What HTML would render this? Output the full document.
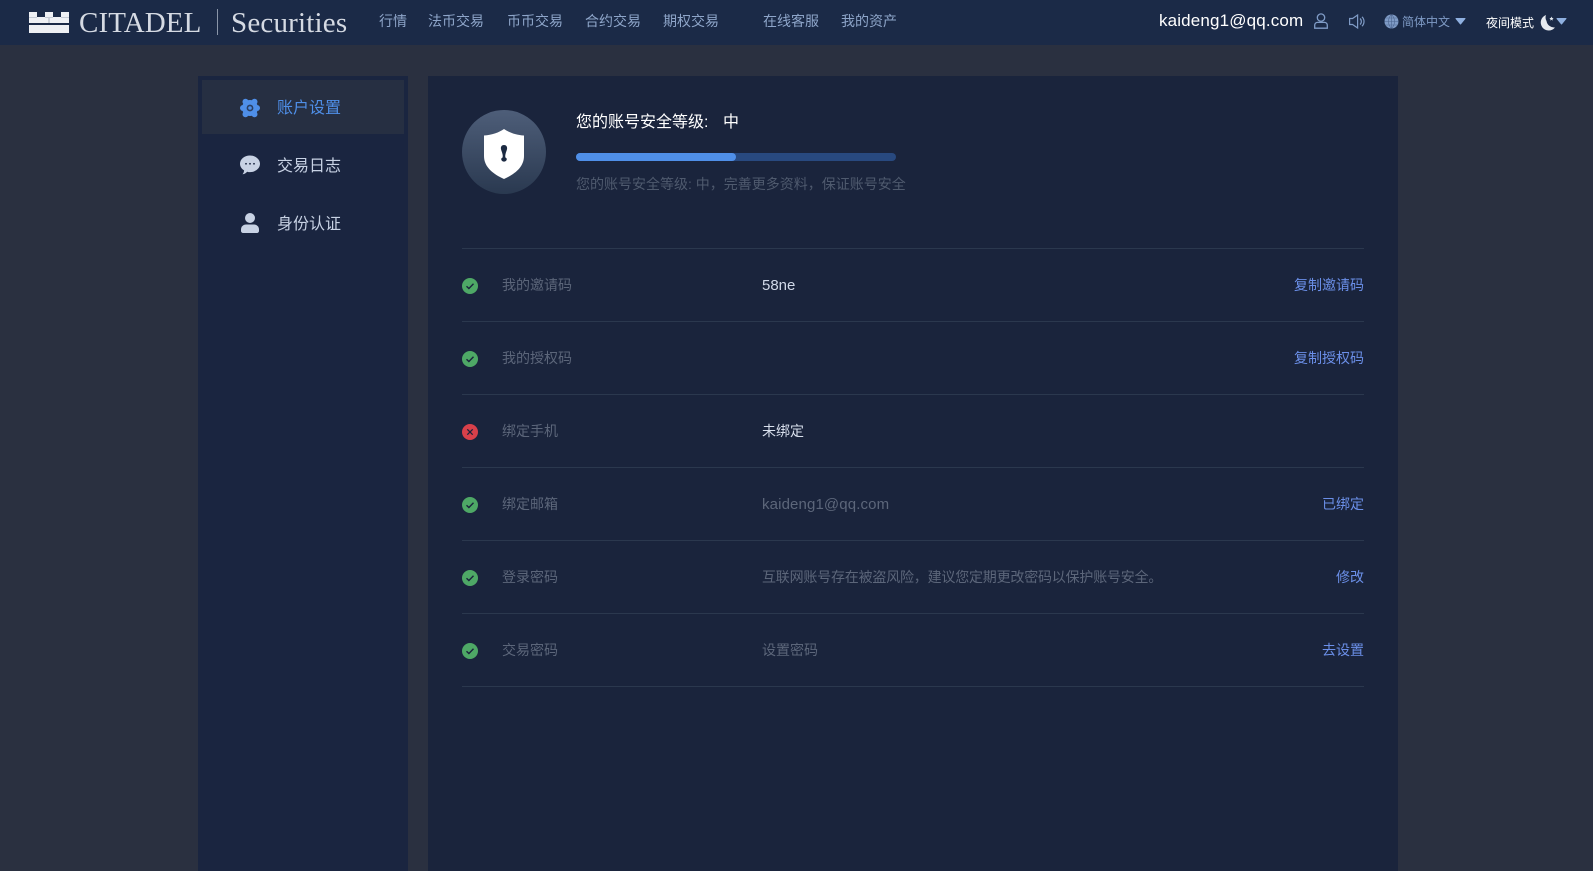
<!DOCTYPE html>
<html lang="zh-CN">
<head>
<meta charset="utf-8">
<title>账户设置</title>
<style>
html,body{margin:0;padding:0;width:1593px;height:871px;overflow:hidden;background:#2a3040;}
body{position:relative;font-family:"Liberation Sans","Noto Sans CJK SC",sans-serif;font-size:14px;}
.a{position:absolute;white-space:nowrap;line-height:20px;}
svg{position:absolute;display:block;overflow:visible;}
#hd{position:absolute;left:0;top:0;width:1593px;height:45px;background:#1b2a47;}
.n{top:11px;color:#8ea5c9;font-size:14px;}
#sb{position:absolute;left:198px;top:76px;width:210px;height:795px;background:#1a2540;}
#act{position:absolute;left:202px;top:80px;width:202px;height:54px;background:#262f42;}
#mn{position:absolute;left:428px;top:76px;width:970px;height:795px;background:#1a243c;}
.side{font-size:16px;left:277px;color:#c8d2e4;line-height:24px;}
.l{position:absolute;left:462px;width:902px;height:1px;background:#2b384e;}
.lb{left:502px;color:#5c667a;}
.v{left:762px;color:#5c667a;}
.r{right:229px;color:#6b8fe8;}
</style>
</head>
<body>
<div id="hd"></div>

<svg style="left:29px;top:12px" width="40" height="21" viewBox="0 0 40 21">
<path fill="#eef0f4" d="M0 0h8v5h8V0h8v5h8V0h8v11H0zM0 13h40v8H0z"/>
<path fill="#aab2c0" d="M0 5h8v.6H0zM16 5h8v.6h-8zM32 5h8v.6h-8zM19.500 6h1v5h-1z"/>
</svg>
<div class="a" style="left:79px;top:8px;line-height:30px;font-family:'Liberation Serif',serif;font-size:29px;letter-spacing:.1px;color:#d5dae3;">CITADEL</div>
<div style="position:absolute;left:217px;top:9px;width:1px;height:26px;background:#8a95a8;"></div>
<div class="a" style="left:231px;top:8px;line-height:30px;font-family:'Liberation Serif',serif;font-size:29px;letter-spacing:.2px;color:#d5dae3;">Securities</div>

<div class="a n" style="left:379px;">行情</div>
<div class="a n" style="left:428px;">法币交易</div>
<div class="a n" style="left:507px;">币币交易</div>
<div class="a n" style="left:585px;">合约交易</div>
<div class="a n" style="left:663px;">期权交易</div>
<div class="a n" style="left:763px;">在线客服</div>
<div class="a n" style="left:841px;">我的资产</div>

<div class="a" style="left:1159px;top:11px;font-size:17px;letter-spacing:.15px;color:#fff;">kaideng1@qq.com</div>
<svg style="left:1314px;top:13px" width="14" height="16" viewBox="0 0 14 16" fill="none" stroke="#7f9bc6" stroke-width="1.3">
<circle cx="7" cy="4.6" r="3.7"/>
<path d="M3.600 9.400h6.800a2.800 2.800 0 0 1 2.900 2.900v2.900H.7v-2.900a2.800 2.800 0 0 1 2.900-2.900z"/>
</svg>
<svg style="left:1349px;top:14px" width="16" height="15" viewBox="0 0 16 15" fill="none" stroke="#7f9bc6" stroke-width="1.2">
<path d="M.6 4.500h3L8.600 1v13L3.600 10.500h-3z"/>
<path d="M11 4.500a4 4 0 0 1 0 6M13 2.800a6.500 6.500 0 0 1 0 9.400"/>
</svg>
<svg style="left:1384px;top:14px" width="15" height="15" viewBox="0 0 15 15" fill="none">
<circle cx="7.500" cy="7.500" r="7" fill="#7f9bc6"/>
<path d="M.5 7.500h14M1.600 4h11.800M1.600 11h11.800M7.500.5v14M7.500.5c-4 4-4 10 0 14M7.500.5c4 4 4 10 0 14" stroke="#4d6690" stroke-width=".6"/>
</svg>
<div class="a" style="left:1402px;top:12px;font-size:12px;color:#7f9bc6;">简体中文</div>
<svg style="left:1455px;top:18px" width="11" height="7" viewBox="0 0 11 7"><path fill="#8fb0e0" stroke="#8fb0e0" stroke-linejoin="round" d="M1 .5h9L5.500 6z"/></svg>
<div class="a" style="left:1486px;top:13px;font-size:12px;color:#fff;">夜间模式</div>
<svg style="left:1540px;top:14px" width="16" height="17" viewBox="0 0 16 17">
<path fill="#e6eaf0" d="M6 1A8 8 0 1 0 15 13.500 7.800 7.800 0 0 1 6.500 7 7 7 0 0 1 6 1z"/>
<path fill="#e6eaf0" d="M11.500 2.500l.6 1.400 1.500.2-1.100 1 .3 1.500-1.300-.8-1.300.8.300-1.500-1.100-1 1.500-.2z"/>
</svg>
<svg style="left:1556px;top:18px" width="11" height="7" viewBox="0 0 11 7"><path fill="#8fb0e0" stroke="#8fb0e0" stroke-linejoin="round" d="M1 .5h9L5.500 6z"/></svg>

<div id="sb"></div>
<div id="act"></div>
<svg style="left:240px;top:98px" width="20" height="20" viewBox="0 0 20 20">
<g fill="#4f8fe8">
<circle cx="10" cy="10" r="8"/>
<circle cx="5.500" cy="3.800" r="3"/><circle cx="14.500" cy="3.800" r="3"/>
<circle cx="3" cy="10" r="3"/><circle cx="17" cy="10" r="3"/>
<circle cx="5.500" cy="16.200" r="3"/><circle cx="14.500" cy="16.200" r="3"/>
</g>
<circle cx="10" cy="10" r="3.400" fill="#2a3f63"/>
<circle cx="10" cy="10" r="1.800" fill="#4f8fe8"/>
</svg>
<div class="a side" style="top:97px;color:#4f8fe8;">账户设置</div>
<svg style="left:240px;top:155px" width="20" height="20" viewBox="0 0 20 20">
<path fill="#c8d2e4" d="M10 .5c5.500 0 10 3.700 10 8.300s-4.500 8.300-10 8.300c-1 0-1.900-.1-2.800-.4-1 1-2.500 2.400-4.700 2.600 1-1.100 1.500-2.500 1.600-3.900C1.600 13.900 0 11.500 0 8.800 0 4.200 4.500.5 10 .5z"/>
<circle cx="6" cy="8.800" r=".9" fill="#1a2540"/><circle cx="10" cy="8.800" r=".9" fill="#1a2540"/><circle cx="14" cy="8.800" r=".9" fill="#1a2540"/>
</svg>
<div class="a side" style="top:155px;">交易日志</div>
<svg style="left:241px;top:213px" width="18" height="20" viewBox="0 0 18 20">
<circle cx="9" cy="5" r="5" fill="#c8d2e4"/>
<path fill="#c8d2e4" d="M5 11.500h8c2.800 0 5 2.200 5 5V18c0 1.100-.9 2-2 2H2c-1.100 0-2-.9-2-2v-1.500c0-2.800 2.200-5 5-5z"/>
</svg>
<div class="a side" style="top:213px;">身份认证</div>

<div id="mn"></div>
<svg style="left:462px;top:110px" width="84" height="84" viewBox="0 0 84 84">
<defs><linearGradient id="g" x1="0" y1="0" x2="0" y2="1"><stop offset="0" stop-color="#4e5e79"/><stop offset="1" stop-color="#2a3950"/></linearGradient></defs>
<circle cx="42" cy="42" r="42" fill="url(#g)"/>
<path fill="#fff" d="M42 19c5 3.500 12 6 20 6.500V46c0 11-9 18-20 23-11-5-20-12-20-23V25.500C30 25 37 22.500 42 19z"/>
<path fill="#1c2a42" d="M42 35c2.200 0 3.300 1.600 3.100 3.600-.2 1.700-1.300 3.600-1.700 6-.2 1-.2 2 .1 3 1.200.4 1.400 1.300 1.200 2.100-.3 1.200-1.500 1.900-2.700 1.900s-2.400-.7-2.700-1.900c-.2-.8 0-1.700 1.200-2.100.3-1 .3-2 .1-3-.4-2.400-1.500-4.300-1.700-6-.2-2 .9-3.600 3.100-3.600z"/>
</svg>
<div class="a" style="left:576px;top:113px;font-size:16px;color:#fff;">您的账号安全等级:</div>
<div class="a" style="left:723px;top:113px;font-size:16px;color:#fff;">中</div>
<div style="position:absolute;left:576px;top:153px;width:320px;height:8px;border-radius:4px;background:#28497f;"></div>
<div style="position:absolute;left:576px;top:153px;width:160px;height:8px;border-radius:4px;background:#4f8fe8;"></div>
<div class="a" style="left:576px;top:174px;color:#4f5a6e;">您的账号安全等级: 中，完善更多资料，保证账号安全</div>

<div class="l" style="top:248px"></div>
<div class="l" style="top:321px"></div>
<div class="l" style="top:394px"></div>
<div class="l" style="top:467px"></div>
<div class="l" style="top:540px"></div>
<div class="l" style="top:613px"></div>
<div class="l" style="top:686px"></div>

<svg style="left:462px;top:278px" width="16" height="16" viewBox="0 0 16 16"><circle cx="8" cy="8" r="8" fill="#4ea866"/><path d="M4.500 8.200l2.400 2.300 4.600-4.700" fill="none" stroke="#1a243c" stroke-width="1.400"/></svg>
<div class="a lb" style="top:275px;">我的邀请码</div>
<div class="a" style="left:762px;top:276px;font-size:15px;color:#d0d8e8;">58ne</div>
<div class="a r" style="top:275px;">复制邀请码</div>

<svg style="left:462px;top:351px" width="16" height="16" viewBox="0 0 16 16"><circle cx="8" cy="8" r="8" fill="#4ea866"/><path d="M4.500 8.200l2.400 2.300 4.600-4.700" fill="none" stroke="#1a243c" stroke-width="1.400"/></svg>
<div class="a lb" style="top:348px;">我的授权码</div>
<div class="a r" style="top:348px;">复制授权码</div>

<svg style="left:462px;top:424px" width="16" height="16" viewBox="0 0 16 16"><circle cx="8" cy="8" r="8" fill="#d8404a"/><path d="M5.300 5.300l5.400 5.400M10.700 5.300l-5.400 5.400" fill="none" stroke="#1a243c" stroke-width="1.300"/></svg>
<div class="a lb" style="top:421px;">绑定手机</div>
<div class="a" style="left:762px;top:421px;color:#d8dfec;">未绑定</div>

<svg style="left:462px;top:497px" width="16" height="16" viewBox="0 0 16 16"><circle cx="8" cy="8" r="8" fill="#4ea866"/><path d="M4.500 8.200l2.400 2.300 4.600-4.700" fill="none" stroke="#1a243c" stroke-width="1.400"/></svg>
<div class="a lb" style="top:494px;">绑定邮箱</div>
<div class="a v" style="top:495px;font-size:15px;letter-spacing:.13px;">kaideng1@qq.com</div>
<div class="a r" style="top:494px;">已绑定</div>

<svg style="left:462px;top:570px" width="16" height="16" viewBox="0 0 16 16"><circle cx="8" cy="8" r="8" fill="#4ea866"/><path d="M4.500 8.200l2.400 2.300 4.600-4.700" fill="none" stroke="#1a243c" stroke-width="1.400"/></svg>
<div class="a lb" style="top:567px;">登录密码</div>
<div class="a v" style="top:567px;letter-spacing:-.2px;">互联网账号存在被盗风险，建议您定期更改密码以保护账号安全。</div>
<div class="a r" style="top:567px;">修改</div>

<svg style="left:462px;top:643px" width="16" height="16" viewBox="0 0 16 16"><circle cx="8" cy="8" r="8" fill="#4ea866"/><path d="M4.500 8.200l2.400 2.300 4.600-4.700" fill="none" stroke="#1a243c" stroke-width="1.400"/></svg>
<div class="a lb" style="top:640px;">交易密码</div>
<div class="a v" style="top:640px;">设置密码</div>
<div class="a r" style="top:640px;">去设置</div>
</body>
</html>
